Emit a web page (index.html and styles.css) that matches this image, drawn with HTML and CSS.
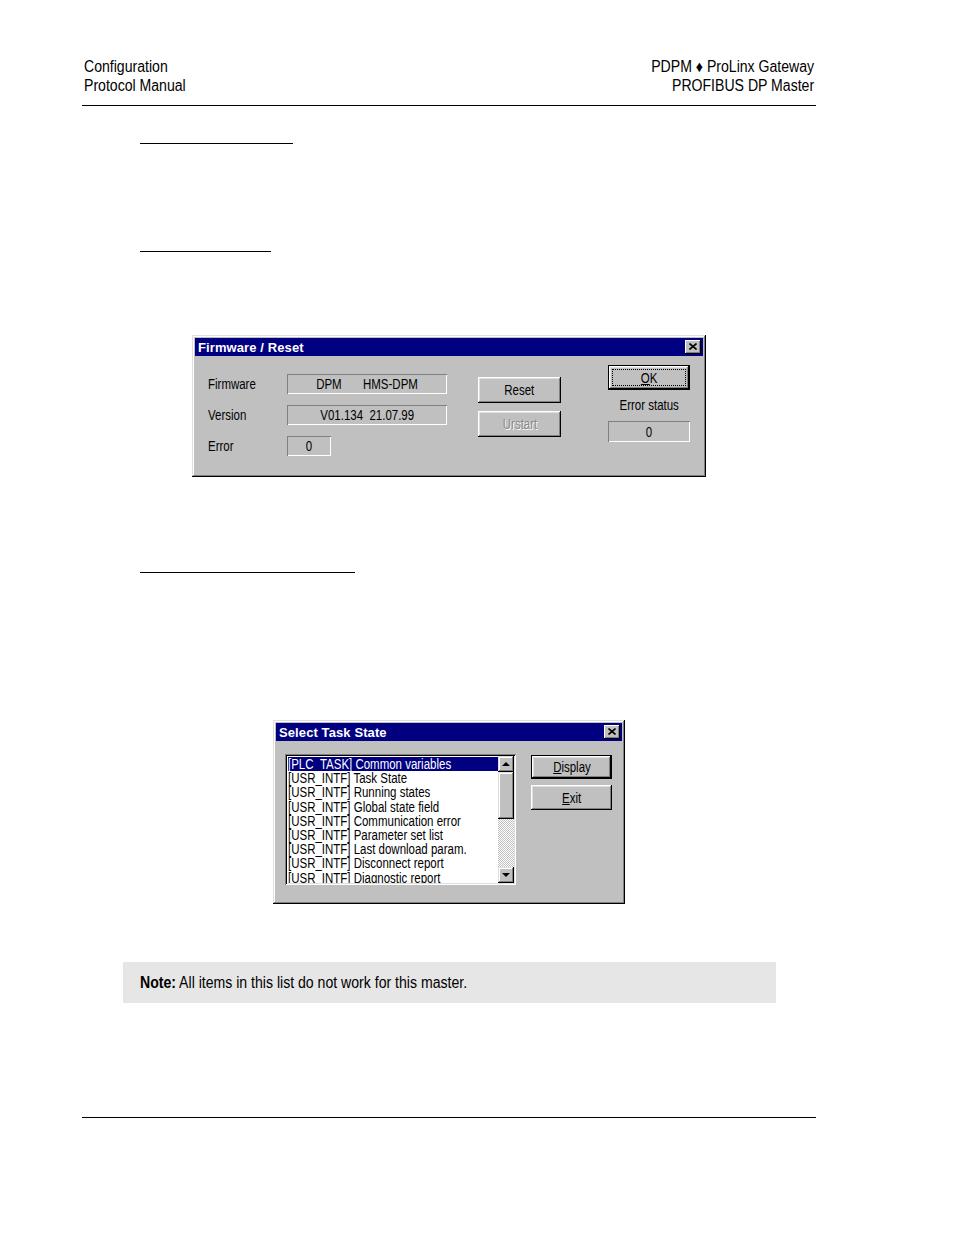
FILE: index.html
```html
<!DOCTYPE html>
<html>
<head>
<meta charset="utf-8">
<link rel="stylesheet" href="styles.css">
</head>
<body>
<div class="page">
  <div class="header">
    <div class="hleft">Configuration<br>Protocol Manual</div>
    <div class="hright">PDPM ♦ ProLinx Gateway<br>PROFIBUS DP Master</div>
  </div>

  <div class="rule rule1"></div>
  <div class="rule rule2"></div>

  <div class="win win1">
    <div class="titlebar">
      <span class="title">Firmware / Reset</span>
      <span class="closebtn"><svg width="8" height="7" viewBox="0 0 8 7"><path d="M0.5 0.5L7.5 6.5M7.5 0.5L0.5 6.5" stroke="#000" stroke-width="1.6" fill="none"/></svg></span>
    </div>
    <div class="client c1">
      <div class="col-left">
        <div class="row"><span class="lbl"><span class="nl">Firmware</span></span><span class="field f-wide"><span class="nc">DPM<span class="gap"></span>HMS-DPM</span></span></div>
        <div class="row"><span class="lbl"><span class="nl">Version</span></span><span class="field f-wide"><span class="nc">V01.134&nbsp;&nbsp;21.07.99</span></span></div>
        <div class="row"><span class="lbl"><span class="nl">Error</span></span><span class="field f-small"><span class="nc">0</span></span></div>
      </div>
      <div class="col-mid">
        <div class="btn b1"><span class="nc">Reset</span></div>
        <div class="btn b1 disabled"><span class="nc">Urstart</span></div>
      </div>
      <div class="col-right">
        <div class="btn default bok"><span class="focus"><span class="nc"><u>O</u>K</span></span></div>
        <div class="es-label"><span class="nc">Error status</span></div>
        <div class="field f-es"><span class="nc">0</span></div>
      </div>
    </div>
  </div>

  <div class="rule rule3"></div>

  <div class="win win2">
    <div class="titlebar">
      <span class="title">Select Task State</span>
      <span class="closebtn"><svg width="8" height="7" viewBox="0 0 8 7"><path d="M0.5 0.5L7.5 6.5M7.5 0.5L0.5 6.5" stroke="#000" stroke-width="1.6" fill="none"/></svg></span>
    </div>
    <div class="client c2">
      <div class="listbox">
        <div class="items">
          <div class="item sel"><span class="nl">[PLC_TASK] Common variables</span></div>
          <div class="item"><span class="nl">[USR_INTF] Task State</span></div>
          <div class="item"><span class="nl">[USR_INTF] Running states</span></div>
          <div class="item"><span class="nl">[USR_INTF] Global state field</span></div>
          <div class="item"><span class="nl">[USR_INTF] Communication error</span></div>
          <div class="item"><span class="nl">[USR_INTF] Parameter set list</span></div>
          <div class="item"><span class="nl">[USR_INTF] Last download param.</span></div>
          <div class="item"><span class="nl">[USR_INTF] Disconnect report</span></div>
          <div class="item"><span class="nl">[USR_INTF] Diagnostic report</span></div>
        </div>
        <div class="scrollbar">
          <div class="sbtn"><span class="tri up"></span></div>
          <div class="thumb"></div>
          <div class="track"></div>
          <div class="sbtn"><span class="tri down"></span></div>
        </div>
      </div>
      <div class="col-btns">
        <div class="btn default bdisp"><span class="nc"><u>D</u>isplay</span></div>
        <div class="btn bexit"><span class="nc"><u>E</u>xit</span></div>
      </div>
    </div>
  </div>

  <div class="note"><span class="nn"><b>Note:</b> All items in this list do not work for this master.</span></div>

  <div class="footer-rule"></div>
</div>
</body>
</html>
```

FILE: styles.css
```css
html, body {
  margin: 0;
  padding: 0;
  background: #fff;
}
.page {
  padding-top: 57px;
  font-family: "Liberation Sans", Arial, sans-serif;
  color: #000;
}

/* Arial Narrow look: Liberation Sans compressed horizontally */
.nl, .nc, .nn {
  display: inline-block;
  white-space: nowrap;
  transform: scaleX(0.82);
}
.nl { transform-origin: left center; }
.nc { transform-origin: center center; }
.nn { transform: scaleX(0.88); transform-origin: left center; }

.header {
  margin-left: 82px;
  width: 734px;
  box-sizing: border-box;
  display: flex;
  justify-content: space-between;
  padding: 0 2px 10px 2px;
  border-bottom: 1px solid #000;
  font-size: 16px;
  line-height: 19px;
}
.hleft {
  white-space: nowrap;
  transform: scaleX(0.88);
  transform-origin: left top;
}
.hright {
  text-align: right;
  white-space: nowrap;
  transform: scaleX(0.88);
  transform-origin: right top;
}

.rule {
  margin-left: 140px;
  height: 0;
  border-top: 1px solid #000;
}
.rule1 { width: 153px; margin-top: 37px; }
.rule2 { width: 131px; margin-top: 107px; }
.rule3 { width: 215px; margin-top: 95px; }

/* Windows 95 style window */
.win {
  box-sizing: border-box;
  background: #c0c0c0;
  padding: 3px;
  box-shadow: inset -1px -1px #000, inset 1px 1px #dfdfdf, inset -2px -2px #808080, inset 2px 2px #fff;
  font-size: 14px;
}
.win1 { margin-left: 192px; width: 514px; height: 142px; margin-top: 83px; }
.win2 { margin-left: 273px; width: 352px; height: 184px; margin-top: 147px; }

.titlebar {
  height: 18px;
  background: #000080;
  display: flex;
  align-items: center;
  justify-content: space-between;
  padding: 0 2px 0 3px;
}
.title {
  color: #fff;
  font-weight: bold;
  font-size: 13px;
  letter-spacing: 0.1px;
}
.closebtn {
  width: 16px;
  height: 14px;
  background: #c0c0c0;
  box-shadow: inset -1px -1px #000, inset 1px 1px #fff, inset -2px -2px #808080;
  display: flex;
  align-items: center;
  justify-content: center;
}
.closebtn svg { display: block; margin-left: -1px; margin-top: -1px; }

.client { display: flex; }

/* dialog 1 */
.col-left {
  padding-left: 13px;
  padding-top: 18px;
  display: flex;
  flex-direction: column;
  gap: 11px;
}
.row { display: flex; align-items: center; height: 20px; }
.lbl { width: 79px; }
.field {
  box-sizing: border-box;
  height: 20px;
  display: flex;
  align-items: center;
  justify-content: center;
  box-shadow: inset 1px 1px #808080, inset -1px -1px #fff;
}
.f-wide { width: 160px; }
.f-small { width: 44px; }
.gap { display: inline-block; width: 26px; }

.btn {
  box-sizing: border-box;
  background: #c0c0c0;
  display: flex;
  align-items: center;
  justify-content: center;
  box-shadow: inset -1px -1px #000, inset 1px 1px #fff, inset -2px -2px #808080, inset 2px 2px #dfdfdf;
}
.btn.default {
  border: 1px solid #000;
}
.disabled { color: #8a8a8a; text-shadow: 1px 1px #fff; }

.col-mid {
  margin-left: 31px;
  padding-top: 21px;
  display: flex;
  flex-direction: column;
  gap: 8px;
}
.b1 { width: 83px; height: 26px; }

.col-right {
  margin-left: 47px;
  padding-top: 9px;
  width: 82px;
  display: flex;
  flex-direction: column;
}
.bok { width: 82px; height: 25px; padding: 3px; }
.focus {
  flex: 1;
  align-self: stretch;
  border: 1px dotted #000;
  display: flex;
  align-items: center;
  justify-content: center;
}
.es-label {
  text-align: center;
  line-height: 16px;
  margin-top: 7px;
  margin-bottom: 8px;
}
.f-es { width: 82px; height: 21px; }

/* dialog 2 */
.c2 {
  padding-left: 9px;
  padding-top: 13px;
}
.listbox {
  width: 231px;
  height: 131px;
  box-sizing: border-box;
  padding: 2px;
  background: #fff;
  box-shadow: inset 1px 1px #808080, inset -1px -1px #fff, inset 2px 2px #000, inset -2px -2px #dfdfdf;
  display: flex;
}
.items {
  flex: 1;
  overflow: hidden;
  padding-top: 1px;
  font-size: 14px;
}
.item {
  height: 14.2px;
  line-height: 14px;
  padding-left: 1px;
  white-space: nowrap;
}
.item.sel {
  background: #000080;
  color: #fff;
  margin-left: 1px;
  padding-left: 0;
}
.scrollbar {
  width: 16px;
  display: flex;
  flex-direction: column;
}
.sbtn, .thumb {
  box-sizing: border-box;
  background: #c0c0c0;
  box-shadow: inset -1px -1px #000, inset 1px 1px #dfdfdf, inset -2px -2px #808080, inset 2px 2px #fff;
}
.sbtn {
  height: 16px;
  display: flex;
  align-items: center;
  justify-content: center;
}
.thumb { height: 47px; }
.track {
  flex: 1;
  background: repeating-conic-gradient(#c0c0c0 0 25%, #fff 0 50%) 0 0 / 2px 2px;
}
.tri {
  width: 0;
  height: 0;
  border-left: 4px solid transparent;
  border-right: 4px solid transparent;
}
.tri.up { border-bottom: 4px solid #000; margin-top: -1px; }
.tri.down { border-top: 4px solid #000; }

.col-btns {
  margin-left: 15px;
  padding-top: 1px;
  display: flex;
  flex-direction: column;
  gap: 6px;
}
.bdisp { width: 81px; height: 24px; }
.bexit { width: 81px; height: 25px; }

.note {
  margin-top: 58px;
  margin-left: 123px;
  width: 653px;
  height: 41px;
  box-sizing: border-box;
  background: #e6e6e6;
  padding-left: 17px;
  font-size: 16px;
  line-height: 41px;
}

.footer-rule {
  margin-top: 114px;
  margin-left: 82px;
  width: 734px;
  border-top: 1px solid #000;
}
```
